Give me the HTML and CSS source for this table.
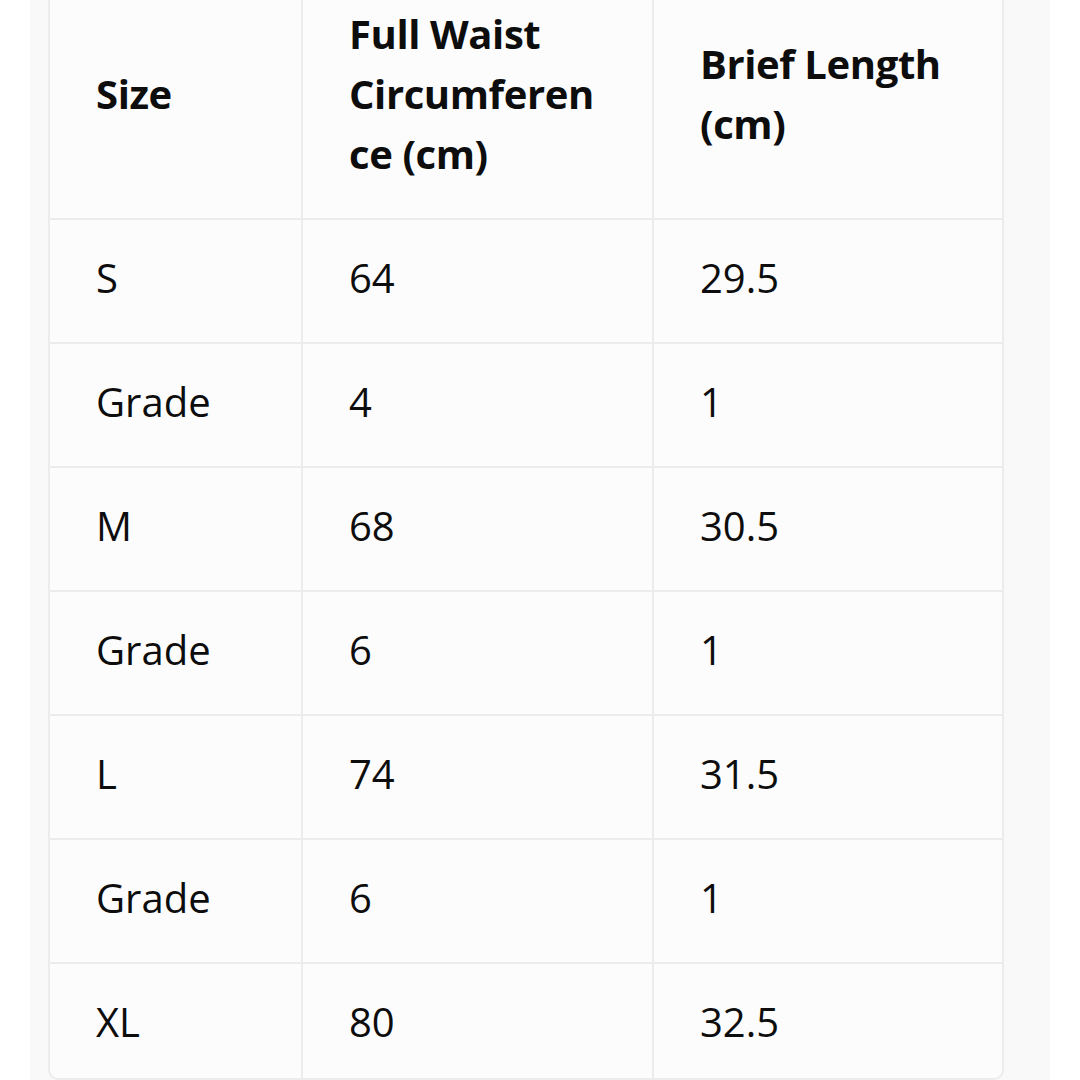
FILE: index.html
```html
<!DOCTYPE html>
<html>
<head>
<meta charset="utf-8">
<link rel="stylesheet" href="styles.css">
</head>
<body>
<div class="page">
  <div class="panel">
    <table class="sizes">
      <colgroup>
        <col class="c1"><col class="c2"><col class="c3">
      </colgroup>
      <thead>
        <tr><th>Size</th><th>Full Waist Circumference (cm)</th><th>Brief Length (cm)</th></tr>
      </thead>
      <tbody>
        <tr><td>S</td><td>64</td><td>29.5</td></tr>
        <tr><td>Grade</td><td>4</td><td>1</td></tr>
        <tr><td>M</td><td>68</td><td>30.5</td></tr>
        <tr><td>Grade</td><td>6</td><td>1</td></tr>
        <tr><td>L</td><td>74</td><td>31.5</td></tr>
        <tr><td>Grade</td><td>6</td><td>1</td></tr>
        <tr class="last"><td>XL</td><td>80</td><td>32.5</td></tr>
      </tbody>
    </table>
  </div>
</div>
</body>
</html>
```

FILE: styles.css
```css
html, body {
  margin: 0;
  padding: 0;
  background: #ffffff;
  overflow: hidden;
  height: 1080px;
}
.page {
  display: flow-root;
  padding-left: 30px;
  height: 1080px;
  overflow: hidden;
}
.panel {
  display: flow-root;
  width: 1020px;
  height: 1080px;
  background: #f9f9f9;
  padding-left: 18px;
  box-sizing: border-box;
}
.sizes {
  margin-top: -26px;
  width: 956px;
  box-sizing: border-box;
  table-layout: fixed;
  border-collapse: separate;
  border-spacing: 0;
  border: 2px solid #ececec;
  border-radius: 10px;
  background: #fcfcfc;
  font-family: "Open Sans", "Noto Sans", sans-serif;
  font-size: 40px;
  color: #0d0d0d;
  overflow: hidden;
}
.c1 { width: 253px; }
.c2 { width: 351px; }
.c3 { width: 348px; }
.sizes th, .sizes td {
  text-align: left;
  vertical-align: middle;
  padding: 28px 46px 34px 46px;
  line-height: 60px;
  border-right: 2px solid #ececec;
  border-bottom: 2px solid #ececec;
  overflow-wrap: anywhere;
}
.sizes th:last-child, .sizes td:last-child { border-right: none; }
.sizes th {
  font-weight: 700;
  letter-spacing: -0.4px;
}
.sizes td {
  font-weight: 400;
}
.sizes tr.last td {
  border-bottom: none;
  padding-bottom: 26px;
}
```
